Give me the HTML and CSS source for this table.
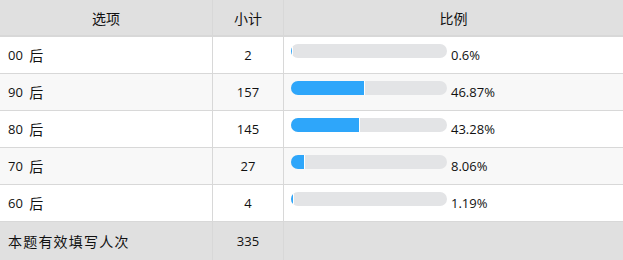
FILE: index.html
```html
<!DOCTYPE html>
<html lang="zh">
<head>
<meta charset="utf-8">
<link rel="stylesheet" href="styles.css">
</head>
<body>
<div class="tbl">
  <div class="row head">
    <div class="c c1 center"><span class="cn">选项</span></div>
    <div class="c c2"><span class="cn">小计</span></div>
    <div class="c c3"><span class="cn">比例</span></div>
  </div>
  <div class="row">
    <div class="c c1">00 <span class="cn gen">后</span></div>
    <div class="c c2">2</div>
    <div class="c c3 pct"><div class="track"><div class="fill" style="width:0.6%"></div></div><span class="val">0.6%</span></div>
  </div>
  <div class="row alt">
    <div class="c c1">90 <span class="cn gen">后</span></div>
    <div class="c c2">157</div>
    <div class="c c3 pct"><div class="track"><div class="fill" style="width:46.87%"></div></div><span class="val">46.87%</span></div>
  </div>
  <div class="row">
    <div class="c c1">80 <span class="cn gen">后</span></div>
    <div class="c c2">145</div>
    <div class="c c3 pct"><div class="track"><div class="fill" style="width:43.28%"></div></div><span class="val">43.28%</span></div>
  </div>
  <div class="row alt">
    <div class="c c1">70 <span class="cn gen">后</span></div>
    <div class="c c2">27</div>
    <div class="c c3 pct"><div class="track"><div class="fill" style="width:8.06%"></div></div><span class="val">8.06%</span></div>
  </div>
  <div class="row">
    <div class="c c1">60 <span class="cn gen">后</span></div>
    <div class="c c2">4</div>
    <div class="c c3 pct"><div class="track"><div class="fill" style="width:1.19%"></div></div><span class="val">1.19%</span></div>
  </div>
  <div class="row foot">
    <div class="c c1"><span class="cn sp">本题有效填写人次</span></div>
    <div class="c c2">335</div>
    <div class="c c3"></div>
  </div>
</div>
</body>
</html>
```

FILE: styles.css
```css
html, body {
  margin: 0;
  padding: 0;
  background: #fff;
}
body {
  font-family: "Open Sans", "Noto Sans CJK SC", sans-serif;
  font-size: 13px;
  color: #111;
}
.tbl {
  width: 623px;
}
.row {
  display: grid;
  grid-template-columns: 213px 71px 1fr;
  height: 37px;
  border-bottom: 1px solid #d8d8d8;
  box-sizing: border-box;
  background: #fff;
}
.row.alt {
  background: #f8f8f8;
}
.row.head {
  height: 37px;
  border-bottom: 2px solid #d8d8d8;
  background: #e0e0e0;
}
.row.foot {
  height: 38px;
  border-bottom: none;
  background: #e0e0e0;
}
.c {
  display: flex;
  align-items: center;
  box-sizing: border-box;
  min-width: 0;
}
.c1 {
  border-right: 1px solid #d8d8d8;
  padding-left: 8px;
  white-space: pre;
}
.c2 {
  border-right: 1px solid #d8d8d8;
  justify-content: center;
}
.c3 {
  justify-content: flex-start;
}
.head .c {
  justify-content: center;
  padding: 0;
}
.cn {
  font-family: "Noto Sans CJK SC", sans-serif;
  font-size: 14px;
}
.gen {
  margin-left: 3px;
}
.sp {
  letter-spacing: 1.2px;
}
.pct {
  padding-left: 7px;
}
.track {
  width: 156px;
  height: 14px;
  border-radius: 7px;
  background: #e3e4e6;
  overflow: hidden;
  margin-bottom: 8px;
  flex: none;
}
.fill {
  height: 100%;
  background: #2ea6fa;
  box-shadow: 1px 0 0 #fff;
}
.val {
  margin-left: 4px;
}
```
